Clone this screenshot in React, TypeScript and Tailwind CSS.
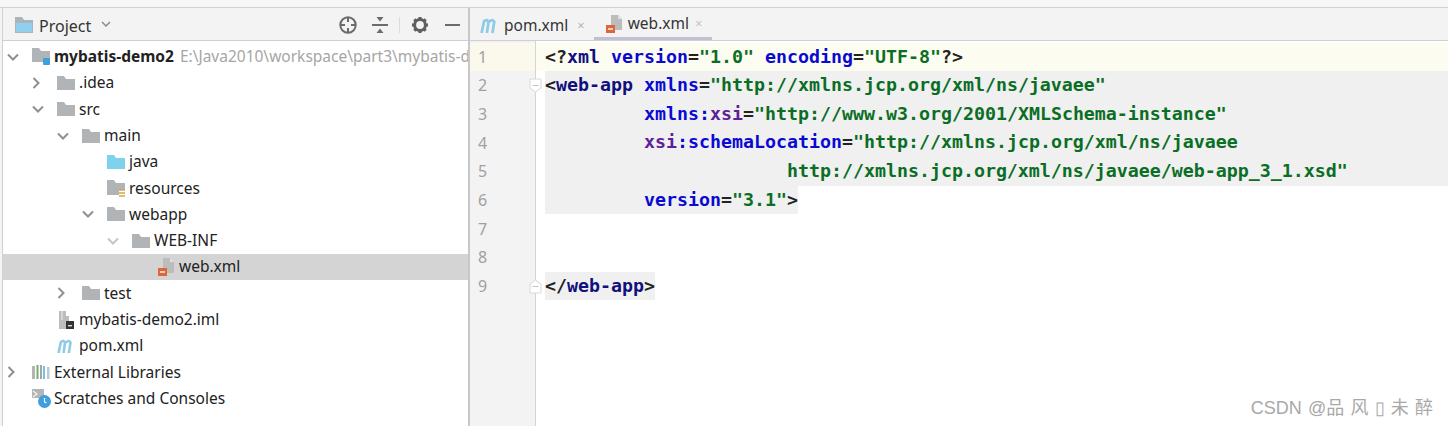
import React from "react";

const Chevron = ({ open, faint }: { open: boolean; faint: boolean }) => (
  <svg className={faint ? "opacity-50" : ""} width="14" height="14" viewBox="0 0 14 14" fill="none" stroke="#8f8f8f" strokeWidth="2">
    {open ? <path d="M2 4.5 L7 9.5 L12 4.5" /> : <path d="M2.5 2 L7.5 7 L2.5 12" />}
  </svg>
);

const Folder = ({ color = "#b1b4b7" }: { color?: string }) => (
  <svg width="18" height="16" viewBox="0 0 18 16">
    <path d="M0 1h7l2 3h9v11H0z" fill={color} />
  </svg>
);

const XmlFile = () => (
  <svg width="19" height="20" viewBox="0 0 19 20">
    <path d="M6 1h7l4 4v11H6z" fill="#bcbcbc" />
    <path d="M13 1v4h4" fill="#e2e2e2" />
    <rect x="1" y="11" width="9" height="8" fill="#d9683f" />
    <rect x="3" y="14" width="5" height="2" fill="#f4d0b0" />
  </svg>
);

const MIcon = ({ size = 18 }: { size?: number }) => (
  <svg width={size} height={size * 0.8} viewBox="0 0 18 14" fill="none" stroke="#8fcbe6" strokeWidth="2.6">
    <path d="M1.5 14 L3.8 3 Q7 0 8 4 L6.5 14 M8 4 Q12 0 13.5 3.5 L11.8 14" />
  </svg>
);

const Icon = ({ kind }: { kind: string }) => {
  if (kind === "module")
    return (
      <svg width="18" height="19" viewBox="0 0 18 19">
        <path d="M0 1h7l2 3h9v11H0z" fill="#b1b4b7" />
        <rect x="11" y="11" width="7" height="7" rx="1" fill="#3f9fdc" />
      </svg>
    );
  if (kind === "java") return <Folder color="#7fd2ec" />;
  if (kind === "res")
    return (
      <svg width="18" height="18" viewBox="0 0 18 18">
        <path d="M0 1h7l2 3h9v7H12v5H0z" fill="#b1b4b7" />
        <path d="M12 11h6M12 14h6M12 17h6" stroke="#d9a441" strokeWidth="1.3" />
      </svg>
    );
  if (kind === "xml") return <XmlFile />;
  if (kind === "iml")
    return (
      <svg width="18" height="20" viewBox="0 0 18 20">
        <path d="M2 1h7v5h3v13H2z" fill="#bdbdbd" />
        <path d="M5 1v9" stroke="#eeeeee" strokeWidth="1" />
        <rect x="9" y="11" width="8" height="8" fill="#333333" />
        <rect x="11" y="15" width="4" height="1.4" fill="#dddddd" />
      </svg>
    );
  if (kind === "pom") return <MIcon />;
  if (kind === "lib")
    return (
      <svg width="18" height="14" viewBox="0 0 18 14">
        <rect x="0" y="1" width="3" height="13" fill="#b4b4b4" />
        <rect x="4.5" y="0" width="2" height="14" fill="#6fb06f" />
        <rect x="8" y="0" width="2" height="14" fill="#a5a5a5" />
        <rect x="11" y="1" width="2" height="13" fill="#7cc0e0" />
        <rect x="15" y="2" width="2.5" height="12" fill="#bcc8d4" />
      </svg>
    );
  if (kind === "scratch")
    return (
      <svg width="20" height="20" viewBox="0 0 20 20">
        <path d="M0 0h12v9H0z" fill="#b5b5b5" />
        <path d="M1 2 L5 5 L1 8" stroke="#f4f4f4" strokeWidth="1.2" fill="none" />
        <circle cx="12.5" cy="12.5" r="6.5" fill="#3f9fdc" />
        <path d="M12.5 9v4l2 1" stroke="#fff" strokeWidth="1.2" fill="none" />
      </svg>
    );
  return <Folder />;
};

type Row = {
  depth: number;
  name: string;
  kind: string;
  arrow?: "open" | "closed";
  bold?: boolean;
  hint?: string;
  selected?: boolean;
};

const rows: Row[] = [
  { depth: 0, name: "mybatis-demo2", kind: "module", arrow: "open", bold: true, hint: "E:\\Java2010\\workspace\\part3\\mybatis-d" },
  { depth: 1, name: ".idea", kind: "folder", arrow: "closed" },
  { depth: 1, name: "src", kind: "folder", arrow: "open" },
  { depth: 2, name: "main", kind: "folder", arrow: "open" },
  { depth: 3, name: "java", kind: "java" },
  { depth: 3, name: "resources", kind: "res" },
  { depth: 3, name: "webapp", kind: "folder", arrow: "open" },
  { depth: 4, name: "WEB-INF", kind: "folder", arrow: "open" },
  { depth: 5, name: "web.xml", kind: "xml", selected: true },
  { depth: 2, name: "test", kind: "folder", arrow: "closed" },
  { depth: 1, name: "mybatis-demo2.iml", kind: "iml" },
  { depth: 1, name: "pom.xml", kind: "pom" },
  { depth: 0, name: "External Libraries", kind: "lib", arrow: "closed" },
  { depth: 0, name: "Scratches and Consoles", kind: "scratch" },
];

const TreeRow = ({ row }: { row: Row }) => (
  <div
    className={`flex h-[26.3px] items-center whitespace-nowrap overflow-hidden ${row.selected ? "bg-[#d4d4d4]" : ""}`}
    style={{ paddingLeft: 3 + row.depth * 25 }}
  >
    <span className="flex w-[22px] shrink-0 justify-center pr-[8px]">
      {row.arrow && <Chevron open={row.arrow === "open"} faint={row.depth === 4} />}
    </span>
    <span className="flex w-[26px] shrink-0 items-center pl-[4px]">
      <Icon kind={row.kind} />
    </span>
    <span className={`text-[15.5px] text-[#222222] ${row.bold ? "font-bold" : ""}`}>{row.name}</span>
    {row.hint && <span className="ml-[6px] text-[15.5px] text-[#a6a6a6]">{row.hint}</span>}
  </div>
);

const B = "text-[#0a0ad2]";
const G = "text-[#0a6e24]";
const N = "text-[#10107e]";
const K = "text-[#222222]";
const P = "text-[#5f1f9a]";

const Fold = ({ up }: { up?: boolean }) => (
  <svg className="absolute left-[-16px] top-[7px]" width="13" height="15" viewBox="0 0 13 15" fill="#ffffff" stroke="#d8d8d8">
    <path d={up ? "M1 14V5l5.5-4L12 5v9z" : "M1 1v9l5.5 4L12 10V1z"} />
    <path d="M3.5 7.5h6" stroke="#c4c4c4" />
  </svg>
);

const Line = ({ cls, up, fold, children }: { cls?: string; up?: boolean; fold?: boolean; children?: React.ReactNode }) => (
  <div className={`relative h-[28.65px] leading-[28.65px] whitespace-pre ${cls ?? "ml-[9px]"}`}>
    {fold && <Fold up={up} />}
    {children}
  </div>
);

export default function App() {
  return (
    <div className="flex h-[426px] w-[1448px] flex-col overflow-hidden bg-white font-['Noto_Sans','Open_Sans',sans-serif]">
      <div className="h-[8px] shrink-0 border-b border-[#d2d2d2] bg-[#f7f7f7]" />
      <div className="flex min-h-0 flex-1">
        <div className="w-[3px] shrink-0 border-r border-[#d0d0d0] bg-[#f4f4f4]" />
        <aside className="flex w-[465px] shrink-0 flex-col overflow-hidden">
          <div className="flex h-[33px] shrink-0 items-center border-b border-[#cfcfcf] bg-[#f3f3f3] pl-[12px] pt-[1px]">
            <svg width="18" height="16" viewBox="0 0 18 16">
              <path d="M0 0h7l2 3h9v13H0z" fill="#a9b4bd" />
              <rect x="1" y="6" width="16" height="9" fill="#8fd0ee" />
            </svg>
            <span className="ml-[6px] pt-[2px] text-[16px] text-[#333333]">Project</span>
            <svg className="ml-[10px]" width="10" height="7" viewBox="0 0 10 7" fill="none" stroke="#8a8a8a" strokeWidth="1.5">
              <path d="M1 1l4 4 4-4" />
            </svg>
            <div className="ml-auto flex items-center pr-[8px]">
              <svg width="20" height="20" viewBox="0 0 20 20" fill="none" stroke="#6b6b6b" strokeWidth="2">
                <circle cx="10" cy="10" r="7.7" />
                <path d="M10 2v5M10 13v5M2 10h5M13 10h5" />
              </svg>
              <svg className="ml-[13px]" width="18" height="18" viewBox="0 0 18 18" fill="#6b6b6b">
                <rect x="1" y="8" width="16" height="2" />
                <path d="M5.5 1h7L9 5.5zM9 12.5L12.5 17h-7z" />
              </svg>
              <div className="ml-[10px] h-[16px] w-px bg-[#dcdcdc]" />
              <svg className="ml-[11px]" width="18" height="18" viewBox="0 0 18 18">
                <circle cx="9" cy="9" r="5.4" fill="none" stroke="#5f5f5f" strokeWidth="3" />
                <path d="M9 1v3M9 14v3M1 9h3M14 9h3M3.3 3.3l2.2 2.2M12.5 12.5l2.2 2.2M3.3 14.7l2.2-2.2M12.5 5.5l2.2-2.2" stroke="#5f5f5f" strokeWidth="3" />
              </svg>
              <div className="ml-[16px] h-[2px] w-[15px] bg-[#6b6b6b]" />
            </div>
          </div>
          <div className="flex-1 overflow-hidden pt-[2.5px]">
            {rows.map((r) => (
              <TreeRow key={r.name} row={r} />
            ))}
          </div>
        </aside>
        <div className="w-[2px] shrink-0 bg-[#c8c8c8]" />
        <main className="flex min-w-0 flex-1 flex-col">
          <div className="flex h-[33px] shrink-0 items-center border-b border-[#cfcfcf] bg-[#f3f3f3] pl-[10px] text-[15.5px] text-[#333333]">
            <div className="flex h-full items-center pt-[3px]">
              <MIcon size={19} />
              <span className="ml-[5px]">pom.xml</span>
              <span className="ml-[9px] text-[13px] text-[#b5b5b5]">×</span>
            </div>
            <div className="ml-[9px] flex h-full w-[118px] items-center border-b-[3px] border-[#c0c0d0] pl-[11px] pt-[3px]">
              <XmlFile />
              <span className="ml-[4px]">web.xml</span>
              <span className="ml-[6px] text-[13px] text-[#c4c4c4]">×</span>
            </div>
          </div>
          <div className="flex min-h-0 flex-1">
            <div className="w-[66px] shrink-0 border-r border-[#d4d4d4] bg-[#f3f3f3] pt-[1.5px] text-[16px] text-[#a0a0a0]">
              {[1, 2, 3, 4, 5, 6, 7, 8, 9].map((n) => (
                <div key={n} className={`flex h-[28.65px] items-center pl-[8px] ${n === 1 ? "bg-[#fbf9ec]" : ""}`}>
                  {n}
                </div>
              ))}
            </div>
            <div className="min-w-0 flex-1 pt-[1.5px] font-['DejaVu_Sans_Mono',monospace] text-[18.27px] font-semibold">
              <Line cls="bg-[#fdfcf0] pl-[9px]">
                <span className={K}>{"<?"}</span><span className={N}>xml</span> <span className={B}>version</span><span className={K}>=</span><span className={G}>"1.0"</span> <span className={B}>encoding</span><span className={K}>=</span><span className={G}>"UTF-8"</span><span className={K}>{"?>"}</span>
              </Line>
              <Line cls="ml-[9px] bg-[#f0f0f0]" fold>
                <span className={K}>{"<"}</span><span className={N}>web-app</span> <span className={B}>xmlns</span><span className={K}>=</span><span className={G}>"http://xmlns.jcp.org/xml/ns/javaee"</span>
              </Line>
              <Line cls="ml-[9px] bg-[#f0f0f0]">
                {"         "}<span className={B}>xmlns:</span><span className={P}>xsi</span><span className={K}>=</span><span className={G}>"http://www.w3.org/2001/XMLSchema-instance"</span>
              </Line>
              <Line cls="ml-[9px] bg-[#f0f0f0]">
                {"         "}<span className={P}>xsi</span><span className={B}>:schemaLocation</span><span className={K}>=</span><span className={G}>"http://xmlns.jcp.org/xml/ns/javaee</span>
              </Line>
              <Line cls="ml-[9px] bg-[#f0f0f0]">
                {"                      "}<span className={G}>http://xmlns.jcp.org/xml/ns/javaee/web-app_3_1.xsd"</span>
              </Line>
              <Line>
                <span className="inline-block bg-[#f0f0f0]">
                  {"         "}<span className={B}>version</span><span className={K}>=</span><span className={G}>"3.1"</span><span className={K}>{">"}</span>
                </span>
              </Line>
              <Line />
              <Line />
              <Line fold up>
                <span className="inline-block bg-[#f0f0f0]">
                  <span className={K}>{"</"}</span><span className={N}>web-app</span><span className={K}>{">"}</span>
                </span>
              </Line>
            </div>
          </div>
          <div className="absolute bottom-[4px] right-[15px] font-['Liberation_Sans','Noto_Sans_CJK_SC',sans-serif] text-[18px] text-[#a8a8a8] [word-spacing:1.2px]">
            CSDN @品 风 ▯ 未 醉
          </div>
        </main>
      </div>
    </div>
  );
}
